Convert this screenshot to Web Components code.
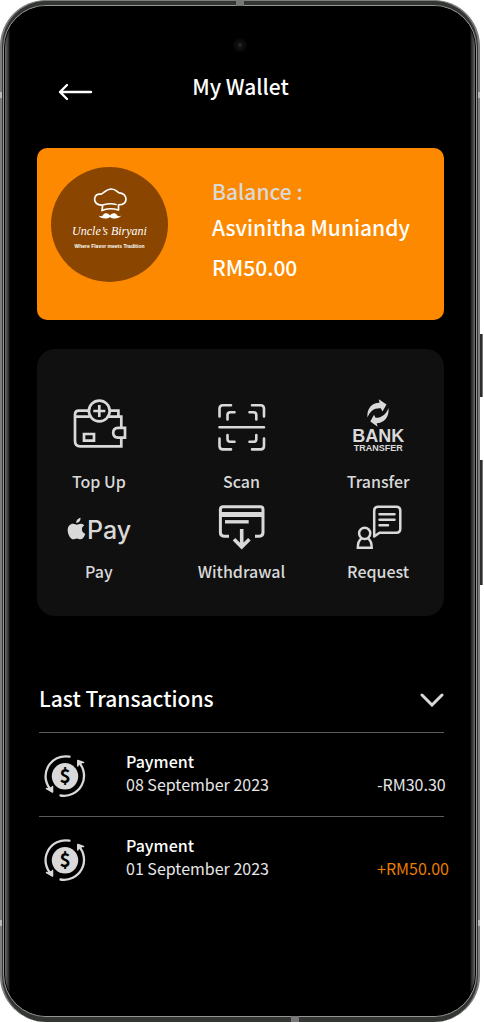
<!DOCTYPE html>
<html lang="en">
<head>
<meta charset="utf-8">
<meta name="viewport" content="width=device-width, initial-scale=1">
<title>My Wallet</title>
<style>
  body { margin: 0; background: #fff; font-family: "Noto Sans CJK SC", "Noto Sans", sans-serif; color: #fff; }
</style>
</head>
<body>
<phone-frame>
  <wallet-header>My Wallet</wallet-header>
  <balance-card>
    <brand-logo slot="logo"></brand-logo>
    <span slot="label">Balance :</span>
    <span slot="name">Asvinitha Muniandy</span>
    <span slot="amount">RM50.00</span>
  </balance-card>
  <action-grid>
    <action-tile icon="topup">Top Up</action-tile>
    <action-tile icon="scan">Scan</action-tile>
    <action-tile icon="transfer">Transfer</action-tile>
    <action-tile icon="pay">Pay</action-tile>
    <action-tile icon="withdraw">Withdrawal</action-tile>
    <action-tile icon="request">Request</action-tile>
  </action-grid>
  <transaction-list>
    <span slot="title">Last Transactions</span>
    <transaction-row>Payment<span slot="date">08 September 2023</span><span slot="amount">-RM30.30</span></transaction-row>
    <transaction-row credit>Payment<span slot="date">01 September 2023</span><span slot="amount">+RM50.00</span></transaction-row>
  </transaction-list>
</phone-frame>

<script>
const define = (name, html, setup) => customElements.define(name, class extends HTMLElement {
  constructor() {
    super();
    const t = document.createElement('template');
    t.innerHTML = html;
    this.attachShadow({ mode: 'open' }).append(t.content.cloneNode(true));
  }
  connectedCallback() { if (setup) setup(this, this.shadowRoot); }
});

define('phone-frame', `
<style>
  :host { position: relative; box-sizing: border-box; margin-right: 4px; min-height: calc(100vh - 1px); display: flex; }
  .metal { flex: 1; display: flex; box-sizing: border-box; border: 1px solid #7c7f7c; border-width: 1px 2px 0; border-radius: 46px; background: #343634; padding: 4px 1px 5px; }
  .rim { flex: 1; display: flex; box-sizing: border-box; border: 1px solid #949694; border-radius: 43px; background: #000; padding: 0 1px; }
  .glass { flex: 1; box-sizing: border-box; border-radius: 42px; padding: 62px 31px 100px 32px;
    background: linear-gradient(to right, #6e6e6e, #4a4a4a 2px, #222 4px, #000 5px, #000 calc(100% - 5px), #222 calc(100% - 4px), #555 calc(100% - 1px), #777); }
  .camera { position: absolute; top: 38px; left: 50%; width: 14px; height: 14px; margin-left: -7px; border-radius: 50%; background: radial-gradient(#3a3a3a, #121212 2px, #080808 60%, #000); }
  .key { position: absolute; left: 100%; width: 3px; background: #2c2e2c; border-right: 1px solid #777; box-sizing: border-box; }
  .volume { top: 334px; height: 63px; }
  .power { top: 460px; height: 125px; }
  .band { position: absolute; background: #777; }
  .t { top: 0; left: 236px; width: 8px; height: 6px; }
  .b { bottom: 0; left: 291px; width: 8px; height: 6px; }
  .l { left: 0; width: 2px; height: 6px; background: #bbb; }
  .r { right: 0; width: 2px; height: 6px; background: #bbb; }
  .hi { top: 92px; } .lo { top: 920px; }
</style>
<div class="metal"><div class="rim"><main class="glass"><slot></slot></main></div></div>
<div class="camera"></div>
<div class="key volume"></div><div class="key power"></div>
<div class="band t"></div><div class="band b"></div>
<div class="band l hi"></div><div class="band l lo"></div>
<div class="band r hi"></div><div class="band r lo"></div>`);

define('wallet-header', `
<style>
  :host { display: grid; grid-template-columns: 1fr auto 1fr; align-items: start; height: 40px; margin-bottom: 40px; }
  button { justify-self: start; margin-left: 20px; padding: 14px 0 0; border: 0; background: none; color: #fff; }
  svg { display: block; }
  h1 { margin: 0; font-size: 21px; line-height: 36px; font-weight: 500; }
</style>
<button type="button" aria-label="Back"><svg width="36" height="20" viewBox="0 0 36 20" fill="none" stroke="#fff" stroke-width="2.400" stroke-linecap="round" stroke-linejoin="round"><path d="M34 10H3M10 3 3 10l7 7"/></svg></button>
<h1><slot></slot></h1>`);

define('brand-logo', `
<style>
  :host { display: flex; flex-direction: column; align-items: center; box-sizing: border-box; width: 117px; height: 115px; padding-top: 19px; border-radius: 50%; background: #8a4500; color: #fff; }
  svg { display: block; }
  .n { font: italic 12px/22px "Liberation Serif", serif; white-space: nowrap; }
  .s { font: bold 5px/8px "Liberation Sans", sans-serif; white-space: nowrap; }
</style>
<svg width="36" height="34" viewBox="0 0 36 34" fill="none" stroke="#fff" stroke-width="1.700" stroke-linecap="round" stroke-linejoin="round">
  <path d="M10 24.500 10.700 19C5 19.500 2.600 16.500 2.600 13.200 2.600 9.500 5.500 7.500 9 8.200 11.500 7.500 14 3 19.500 3 24 3 25 6.200 27 6.800 31 6.800 34 9.500 34 13 34 17 31 18.800 26.500 18.800L26.500 24M10 24.500C14 22.500 20 22.200 26.500 24M10.700 19C16 17.500 21 17.600 24 18.500"/>
  <path d="M18 29.500C16 26.500 12.500 26.500 11 29 10 30.700 8 30.500 6.500 29.600 8 33 15.500 33.500 18 31 20.500 33.500 27.500 33 29.300 29.600 28 30.500 26 30.700 25 29 23.500 26.500 20 26.500 18 29.500Z" fill="#fff" stroke="none"/>
</svg>
<div class="n">Uncle’s Biryani</div>
<div class="s">Where Flavor meets Tradition</div>`);

define('balance-card', `
<style>
  :host { display: flex; align-items: flex-start; box-sizing: border-box; height: 172px; margin-bottom: 29px; padding: 19px 14px; border-radius: 10px; background: #fd8900; gap: 44px; }
  div { display: flex; flex-direction: column; font-size: 21px; font-weight: 500; line-height: 36px; padding-top: 6px; white-space: nowrap; }
  .l { color: #d9d9d9; } p { margin: 0; } .a { padding-top: 4px; }
</style>
<slot name="logo"></slot>
<div><p class="l"><slot name="label"></slot></p><p><slot name="name"></slot></p><p class="a"><slot name="amount"></slot></p></div>`);

define('action-grid', `
<style>
  :host { display: grid; grid-template-columns: 124fr 162fr 112fr; grid-template-rows: auto auto; row-gap: 12px; align-content: start; box-sizing: border-box; height: 267px; margin-bottom: 64px; padding: 50px 10px 30px 0; border-radius: 18px; background: #101010; }
</style><slot></slot>`);

const icons = {
  topup: [52, `<g stroke-width="2.700"><circle cx="32.300" cy="12" r="10.400"/><path d="M26.300 12h12M32.300 6v12M21.500 11.700H12q-4 0-4 4V42q0 5.300 5.300 5.300H54.300V39M8 17.700H22.500M42 17.700H54.300V28.500M43 11.700h8.400v6M58 28.800V38.700H51q-4.800-.5-4.800-5t4.800-4.900zM17 35h10v6.700H17z"/></g>`],
  scan: [52, `<g stroke-width="2.600" stroke-linecap="round"><path d="M10.500 17.500V9.700q0-3.400 3.400-3.400H22M55 17.500V9.700q0-3.400-3.400-3.400H43M10.500 39.500V47q0 3.400 3.400 3.400H22M55 39.500V47q0 3.400-3.400 3.400H43M18.500 20.500v-4.400q0-2.800 2.800-2.800H25.500M47.300 20.500v-4.400q0-2.800-2.800-2.800H40.500M18.500 36v3.900q0 2.800 2.800 2.800H25.500M47.300 36v3.900q0 2.800-2.800 2.800H40.500M10.500 28.300H55"/></g>`],
  transfer: [52, `<g fill="#d9d9d9" stroke="none"><path d="M21.500 18.500C20.500 9.500 26 3.700 33.500 3.700L32.800.2 40.500 5.500 36.500 12.500 34.800 9.200C28.500 8.700 24 11.800 21.500 18.500Z"/><path d="M42.500 9C43.500 18 38 24 30.700 24.300L31.600 27.800 24.300 22.500 28 15.800 29.500 18.800C35.500 19 40 15.500 42.500 9Z"/><text x="32.300" y="43" text-anchor="middle" font-family="Liberation Sans,sans-serif" font-weight="700" font-size="18">BANK</text><text x="32.300" y="52" text-anchor="middle" font-family="Liberation Sans,sans-serif" font-weight="700" font-size="9">TRANSFER</text></g>`],
  pay: [44, `<g fill="#d9d9d9" stroke="none"><path d="M13.500 12.800C13.800 15.600 11.800 18 9.300 18 9 15.500 11.200 13.200 13.500 12.800ZM17.300 20.300C13.800 22.500 14.300 27.300 18.300 28.900 17.300 31.700 15.600 34.300 13.500 34.300 12 34.300 11.600 33.400 9.800 33.400S7.500 34.300 6.200 34.300C3.600 34.300.7 29.500.7 25.200.7 21 3.300 18.700 6 18.700 7.700 18.700 8.800 19.700 9.900 19.700 11 19.700 12.200 18.600 14.200 18.700 15.500 18.800 16.600 19.300 17.300 20.300Z"/><text x="20" y="34" font-family="Inter,sans-serif" font-weight="500" font-size="25">Pay</text></g>`],
  withdraw: [44, `<path stroke-width="3" d="M20 31.200H15q-3.600 0-3.600-3.600V4.500Q11.400 1.700 14.200 1.700H51.200Q54 1.700 54 4.500V27.600q0 3.600-3.600 3.600H46"/><path stroke-width="5" d="M11 9.400H54"/><path stroke-width="3.400" d="M16 16.800H39.700"/><path stroke-width="3.600" d="M32.700 24V42.500M25 34.300 32.700 42 40.400 34.300"/>`],
  request: [44, `<g stroke-width="2.500"><path d="M28.200 31.500V5.700q0-4 4-4H50.300q4 0 4 4V23.700q0 4-4 4H33.500z" stroke-linejoin="round"/><circle cx="18.700" cy="28.300" r="5.600"/><path d="M15.500 33.500C12.500 35.500 11.800 38.500 11.800 42.800H25.700C25.700 38.500 25 35.500 22 33.500"/><path stroke-linecap="round" d="M33.500 9.300h15M33.500 14.700h15M33.500 20.300h8.500"/></g>`]
};
define('action-tile', `
<style>
  :host { display: flex; justify-content: center; }
  button { display: flex; flex-direction: column; align-items: center; padding: 0; border: 0; background: none; color: #d9d9d9; font: inherit; font-size: 16px; line-height: 24px; font-weight: 500; white-space: nowrap; }
  .i { margin-bottom: var(--gap); }
  svg { display: block; overflow: visible; }
</style>
<button type="button"><span class="i" aria-hidden="true"></span><span><slot></slot></span></button>`, (el, root) => {
  const [h, body] = icons[el.getAttribute('icon')];
  el.style.setProperty('--gap', h === 52 ? '18px' : '10px');
  root.querySelector('.i').innerHTML = `<svg width="64" height="${h}" viewBox="0 0 64 ${h}" fill="none" stroke="#d9d9d9">${body}</svg>`;
});

define('transaction-list', `
<style>
  :host { display: block; padding-left: 2px; }
  header { display: flex; justify-content: space-between; align-items: center; height: 36px; padding-bottom: 16px; }
  h2 { margin: 0; font-size: 21px; line-height: 36px; font-weight: 500; }
  button { padding: 4px 0 0; border: 0; background: none; } svg { display: block; }
</style>
<header><h2><slot name="title"></slot></h2>
<button type="button" aria-label="Expand transactions"><svg width="24" height="14" viewBox="0 0 24 14" fill="none" stroke="#d9d9d9" stroke-width="3" stroke-linecap="round"><path d="M2 2l10 10L22 2"/></svg></button></header>
<slot></slot>`);

define('transaction-row', `
<style>
  :host { display: grid; grid-template-columns: 87px 1fr 67px; align-items: start; box-sizing: border-box; height: 84px; padding-top: 17px; border-top: 1px solid #5c5c5c; font-size: 16px; line-height: 23px; white-space: nowrap; color: #e6e6e6; }
  svg { display: block; margin: 4px 0 0 4px; }
  b { display: block; font-weight: 500; color: #fff; }
  .a { padding-top: 23px; }
  :host([credit]) .a { color: #e87d00; }
</style>
<svg width="44" height="44" viewBox="0 0 44 44" fill="none" stroke="#d9d9d9" stroke-width="2.300" stroke-linecap="round"><circle cx="22" cy="22.300" r="13.200" fill="#d9d9d9" stroke="none"/><path d="M26.500 2.700A20 20 0 0 0 9 37M17.500 41.500A20 20 0 0 0 35.500 8"/><path fill="#d9d9d9" stroke-width="1.500" stroke-linejoin="round" d="M3.500 34.500 9.500 38 9.500 32.500M34.800 12V6.500L40.500 8.500"/><text x="22" y="29" text-anchor="middle" fill="#000" stroke="none" font-family="Noto Sans CJK SC,sans-serif" font-size="19" font-weight="700">$</text></svg>
<div><b><slot></slot></b><slot name="date"></slot></div>
<div class="a"><slot name="amount"></slot></div>`);
</script>
</body>
</html>
